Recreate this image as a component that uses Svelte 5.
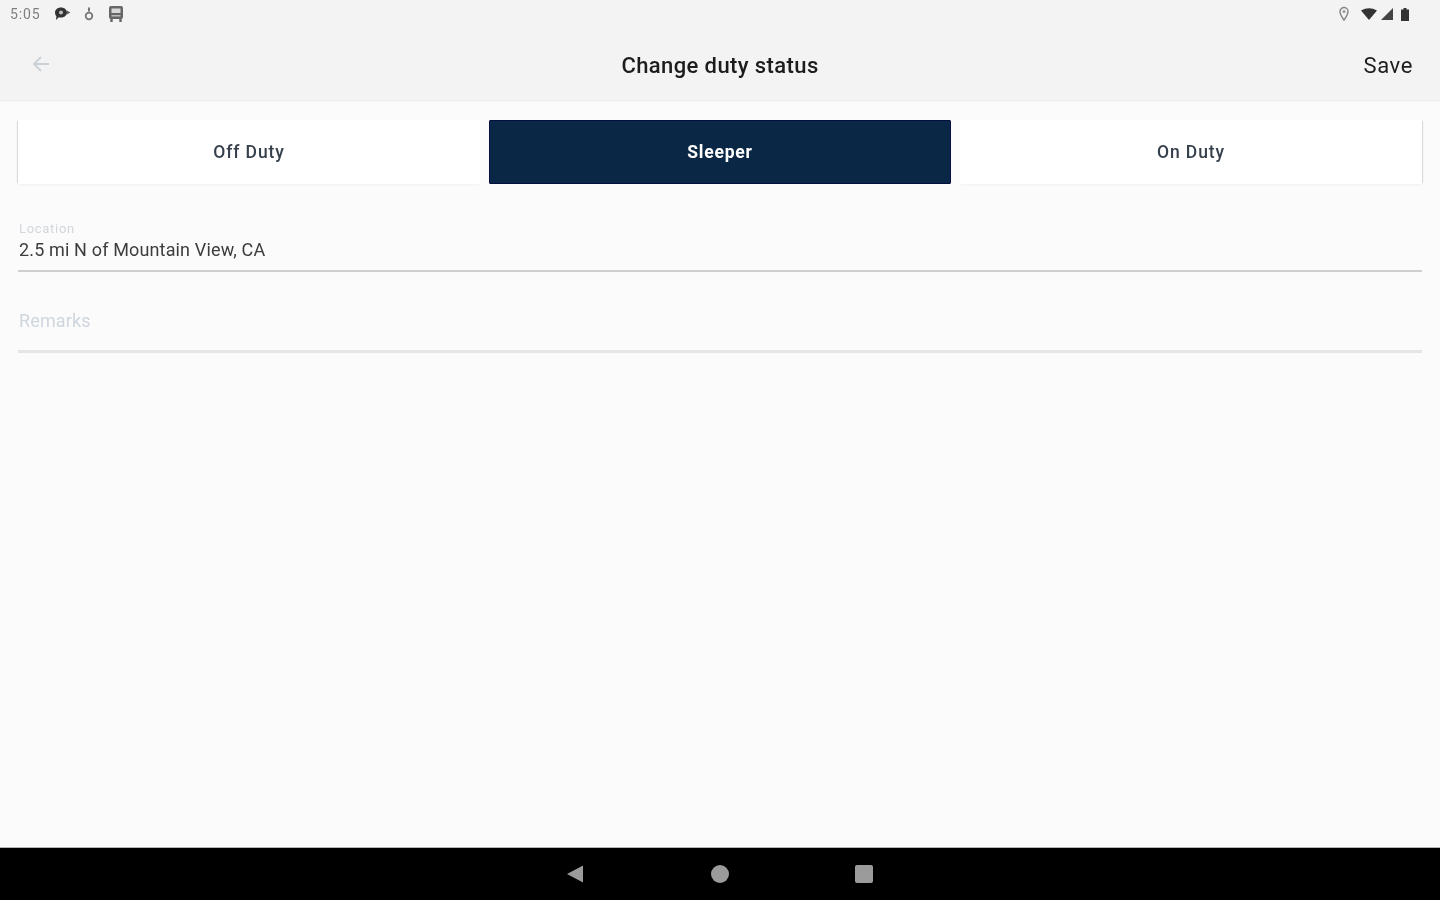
<script lang="ts">
	const statuses = ['Off Duty', 'Sleeper', 'On Duty'];
	let current = $state('Sleeper');
	let location = $state('2.5 mi N of Mountain View, CA');
	let remarks = $state('');
</script>

<div class="screen">
	<header class="appbar">
		<div class="statusbar">
			<div class="status-left">
				<span class="clock">5:05</span>
				<svg class="sb-msg" viewBox="0 0 18 16" aria-hidden="true">
					<path d="M8 1.500c3.400 0 6 2.200 6 5s-2.600 5-6 5c-.8 0-1.500-.1-2.200-.3L3 14l.4-3.800C2.500 9.300 2 8 2 6.500c0-2.800 2.600-5 6-5z" fill="#333" />
					<path d="M14 4.500l3.500 2-3.500 2z" fill="#666" />
					<circle cx="8" cy="6.500" r="2" fill="#bdbdbd" />
				</svg>
				<svg class="sb-drop" viewBox="0 0 12 16" aria-hidden="true">
					<path d="M6 1.500v4" stroke="#777" stroke-width="2" fill="none" />
					<circle cx="6" cy="10" r="3.300" fill="none" stroke="#777" stroke-width="1.800" />
				</svg>
				<svg class="sb-bus" viewBox="0 0 16 18" aria-hidden="true">
					<rect x="1" y="1" width="14" height="13" rx="2" fill="#666" />
					<rect x="3.500" y="3.500" width="9" height="4.500" fill="#d8d8d8" />
					<rect x="3.500" y="10" width="9" height="1.500" fill="#bbb" />
					<path d="M3.500 14v3M12.500 14v3" stroke="#666" stroke-width="2.400" />
				</svg>
			</div>
			<div class="status-right">
				<svg class="sb-pin" viewBox="0 0 12 16" aria-hidden="true">
					<path d="M6 1.500a4 4 0 0 1 4 4c0 3-4 8.500-4 8.500S2 8.500 2 5.500a4 4 0 0 1 4-4z" fill="none" stroke="#888" stroke-width="1.500" />
					<circle cx="6" cy="5.500" r="1.500" fill="#999" />
				</svg>
				<svg class="sb-wifi" viewBox="0 0 16 12" aria-hidden="true">
					<path d="M0 2.500Q8-2 16 2.500L8 12z" fill="#333" />
				</svg>
				<svg class="sb-signal" viewBox="0 0 12 12" aria-hidden="true">
					<path d="M12 0v12H0z" fill="#444" />
				</svg>
				<svg class="sb-battery" viewBox="0 0 8 13" aria-hidden="true">
					<path d="M2.500 0h3v1.500H8V13H0V1.500h2.500z" fill="#333" />
				</svg>
			</div>
		</div>
		<div class="toolbar">
			<button class="back" aria-label="Back">
				<svg viewBox="0 0 20 20" aria-hidden="true">
					<path d="M18 10H3M10 3l-7 7 7 7" fill="none" stroke="#c9d0d6" stroke-width="1.800" />
				</svg>
			</button>
			<h1>Change duty status</h1>
			<button class="save">Save</button>
		</div>
	</header>

	<main class="content">
		<div class="segments">
			{#each statuses as status}
				<button class="segment" class:active={current === status} onclick={() => (current = status)}>{status}</button>
			{/each}
		</div>

		<label class="field location">
			<span class="field-label">Location</span>
			<input bind:value={location} />
		</label>

		<label class="field remarks">
			<input bind:value={remarks} placeholder="Remarks" />
		</label>
	</main>

	<nav class="navbar">
		<svg class="nav-back" viewBox="0 0 20 20" aria-hidden="true">
			<path d="M18 1.500v17L2 10z" fill="#9b9b9b" />
		</svg>
		<span class="nav-home"></span>
		<span class="nav-recent"></span>
	</nav>
</div>

<style>
	:global(body) {
		background: #fbfbfb;
	}

	.screen {
		width: 1440px;
		height: 900px;
		display: flex;
		flex-direction: column;
		overflow: hidden;
		font-family: Roboto, "Liberation Sans", sans-serif;
		background: #fbfbfb;
		filter: blur(0.7px);
	}

	.appbar {
		height: 100px;
		flex-shrink: 0;
		background: #f3f3f3;
		box-shadow: 0 1px 2px rgba(0, 0, 0, 0.08);
		display: flex;
		flex-direction: column;
	}

	.statusbar {
		height: 28px;
		display: flex;
		align-items: center;
		justify-content: space-between;
		padding: 0 31px 0 10px;
	}

	.status-left,
	.status-right {
		display: flex;
		align-items: center;
	}

	.clock {
		font-size: 14px;
		letter-spacing: 0.9px;
		color: #7f7f7f;
		width: 43px;
	}

	.sb-msg {
		width: 18px;
		height: 16px;
		margin-right: 12px;
	}

	.sb-drop {
		width: 12px;
		height: 16px;
		margin-right: 13px;
	}

	.sb-bus {
		width: 16px;
		height: 18px;
	}

	.sb-pin {
		width: 12px;
		height: 16px;
		margin-right: 11px;
	}

	.sb-wifi {
		width: 16px;
		height: 12px;
		margin-right: 4px;
	}

	.sb-signal {
		width: 12px;
		height: 12px;
		margin-right: 8px;
	}

	.sb-battery {
		width: 8px;
		height: 13px;
	}

	.toolbar {
		flex: 1;
		display: grid;
		grid-template-columns: 1fr auto 1fr;
		align-items: center;
		padding: 0 27px;
	}

	.back {
		width: 20px;
		height: 20px;
		padding: 0;
		border: none;
		background: none;
		margin: -1px 0 0 4px;
	}

	.back svg {
		display: block;
		width: 20px;
		height: 20px;
	}

	h1 {
		margin: 2px 0 0;
		font-size: 22px;
		font-weight: 500;
		letter-spacing: 0.4px;
		color: #1c1c1c;
	}

	.save {
		justify-self: end;
		padding: 0;
		border: none;
		background: none;
		margin-top: 2px;
		font-family: inherit;
		font-size: 22px;
		letter-spacing: 0.6px;
		color: #1c1c1c;
	}

	.content {
		flex: 1;
		padding: 20px 18px 0;
	}

	.segments {
		display: grid;
		grid-template-columns: repeat(3, 1fr);
		column-gap: 9px;
		height: 64px;
	}

	.segment {
		border: none;
		background: #fff;
		font-family: inherit;
		font-size: 17.500px;
		font-weight: 500;
		letter-spacing: 0.9px;
		color: #36404c;
		box-shadow: 0 2px 2px -1px #f0f0f0;
	}

	.segment:first-child {
		box-shadow: -2px 0 1px -1px #dcdcdc, 0 2px 2px -1px #f0f0f0;
	}

	.segment:last-child {
		box-shadow: 2px 0 1px -1px #dcdcdc, 0 2px 2px -1px #f0f0f0;
	}

	.segment.active {
		background: #0a2845;
		color: #fff;
		font-weight: 700;
		letter-spacing: 0.8px;
		border-radius: 2px;
		box-shadow: inset 0 0 0 1px #070f40;
	}

	.field {
		display: block;
	}

	.field input {
		display: block;
		width: 100%;
		box-sizing: border-box;
		padding: 0 0 0 1px;
		border: none;
		outline: none;
		background: none;
		font-family: inherit;
		font-size: 18px;
		letter-spacing: 0.15px;
		color: #3d3d3d;
	}

	.location {
		margin-top: 38px;
		border-bottom: 2px solid #cfcfcf;
		height: 48px;
	}

	.field-label {
		display: block;
		padding-left: 1px;
		font-size: 13px;
		letter-spacing: 0.7px;
		line-height: 14px;
		color: #d2d7dc;
	}

	.location input {
		height: 28px;
		line-height: 28px;
	}

	.remarks {
		margin-top: 34px;
		height: 44px;
		border-bottom: 3px solid #e6e6e6;
	}

	.remarks input {
		height: 28px;
	}

	.remarks input::placeholder {
		color: #cfd6de;
		opacity: 1;
	}

	.navbar {
		height: 53px;
		flex-shrink: 0;
		background: #000;
		border-top: 1px solid #b5b5b5;
		box-sizing: border-box;
		display: flex;
		align-items: center;
		justify-content: center;
		gap: 126px;
		padding-right: 2px;
	}

	.nav-back {
		width: 20px;
		height: 20px;
	}

	.nav-home {
		width: 18px;
		height: 18px;
		border-radius: 50%;
		background: #9b9b9b;
	}

	.nav-recent {
		width: 18px;
		height: 18px;
		border-radius: 2px;
		background: #9b9b9b;
	}
</style>
